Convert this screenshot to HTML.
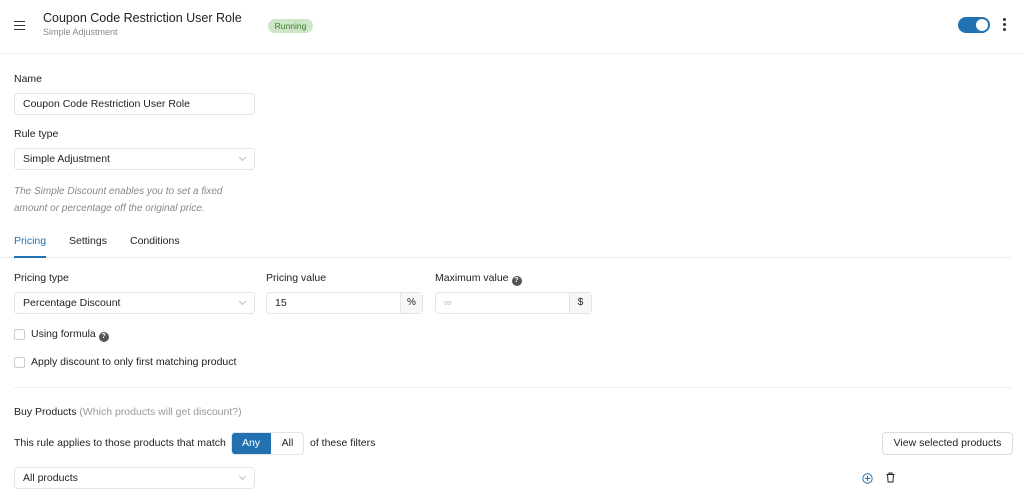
<!DOCTYPE html>
<html><head><meta charset="utf-8"><style>
*{box-sizing:border-box;margin:0;padding:0}
body{width:1024px;height:500px;background:#fff;font-family:"Liberation Sans",sans-serif;color:#1e1e1e;position:relative;overflow:hidden;font-size:10.5px}
.a{position:absolute;white-space:nowrap}
.inp{position:absolute;border:1px solid #e2e4e7;border-radius:4px;background:#fff;height:22px;line-height:20px;padding-left:8px;font-size:10.5px}
.chev{position:absolute;right:9px;top:6px;width:5px;height:5px;border-right:1px solid #bbb;border-bottom:1px solid #bbb;transform:rotate(45deg)}
.addon{position:absolute;top:0;right:0;height:20px;line-height:20px;border-left:1px solid #e2e4e7;background:#f6f7f7;width:22px;text-align:center;font-size:10px}
.cb{position:absolute;width:11px;height:11px;border:1px solid #ccc;border-radius:2px}
.q{display:inline-block;width:10px;height:10px;border-radius:50%;background:#555;color:#fff;font-size:7px;line-height:10px;text-align:center;font-weight:bold;vertical-align:-1px;margin-left:3px}
</style></head><body>
<div class="a" style="left:14px;top:21px;width:11px;height:1px;background:#333;box-shadow:0 4px 0 #333,0 8px 0 #333"></div>
<div class="a" style="left:43px;top:11px;font-size:12.5px;color:#1e1e1e">Coupon Code Restriction User Role</div>
<div class="a" style="left:43px;top:27px;font-size:9px;color:#888">Simple Adjustment</div>
<div class="a" style="left:268px;top:19px;width:45px;height:14px;border-radius:7px;background:#cde6c8;color:#3f7a2e;font-size:8.5px;line-height:14px;text-align:center">Running</div>
<div class="a" style="left:958px;top:17px;width:32px;height:16px;border-radius:8px;background:#2271b1"><div style="position:absolute;right:2px;top:2px;width:12px;height:12px;border-radius:50%;background:#fff"></div></div>
<div class="a" style="left:1003px;top:18px;width:3px;height:3px;border-radius:50%;background:#333;box-shadow:0 5px 0 #333,0 10px 0 #333"></div>
<div class="a" style="left:0;top:53px;width:1024px;height:1px;background:#f0f0f0"></div>

<div class="a" style="left:14px;top:73px">Name</div>
<div class="inp" style="left:14px;top:93px;width:241px">Coupon Code Restriction User Role</div>
<div class="a" style="left:14px;top:128px">Rule type</div>
<div class="inp" style="left:14px;top:148px;width:241px">Simple Adjustment<div class="chev"></div></div>
<div class="a" style="left:14px;top:183px;font-style:italic;color:#888;font-size:10px;line-height:17px">The Simple Discount enables you to set a fixed<br>amount or percentage off the original price.</div>

<div class="a" style="left:14px;top:235px;color:#2271b1">Pricing</div>
<div class="a" style="left:69px;top:235px">Settings</div>
<div class="a" style="left:130px;top:235px">Conditions</div>
<div class="a" style="left:0;top:257px;width:1012px;height:1px;background:#eee"></div>
<div class="a" style="left:14px;top:256px;width:32px;height:2px;background:#2271b1"></div>

<div class="a" style="left:14px;top:272px">Pricing type</div>
<div class="inp" style="left:14px;top:292px;width:241px">Percentage Discount<div class="chev"></div></div>
<div class="a" style="left:266px;top:272px">Pricing value</div>
<div class="inp" style="left:266px;top:292px;width:157px">15<div class="addon">%</div></div>
<div class="a" style="left:435px;top:272px">Maximum value<span class="q">?</span></div>
<div class="inp" style="left:435px;top:292px;width:157px;color:#bbb">∞<div class="addon" style="color:#1e1e1e">$</div></div>

<div class="cb" style="left:14px;top:329px"></div>
<div class="a" style="left:31px;top:328px">Using formula<span class="q">?</span></div>
<div class="cb" style="left:14px;top:357px"></div>
<div class="a" style="left:31px;top:356px">Apply discount to only first matching product</div>
<div class="a" style="left:14px;top:387px;width:998px;height:1px;background:#eee"></div>

<div class="a" style="left:14px;top:406px">Buy Products <span style="color:#999">(Which products will get discount?)</span></div>
<div class="a" style="left:14px;top:437px">This rule applies to those products that match</div>
<div class="a" style="left:231px;top:432px;width:73px;height:23px;border:1px solid #e2e4e7;border-radius:4px;overflow:hidden">
<div style="position:absolute;left:-1px;top:-1px;width:40px;height:23px;background:#2271b1;color:#fff;text-align:center;line-height:23px;border-radius:4px 0 0 4px">Any</div>
<div style="position:absolute;left:39px;top:0;width:33px;text-align:center;line-height:21px">All</div></div>
<div class="a" style="left:310px;top:437px">of these filters</div>
<div class="a" style="left:882px;top:432px;width:131px;height:23px;border:1px solid #dcdcde;border-radius:4px;text-align:center;line-height:21px">View selected products</div>
<div class="inp" style="left:14px;top:467px;width:241px">All products<div class="chev"></div></div>
<svg class="a" style="left:862px;top:473px" width="11" height="11" viewBox="0 0 11 11"><circle cx="5.5" cy="5.5" r="4.7" fill="none" stroke="#2271b1" stroke-width="1"/><path d="M5.5 3v5M3 5.5h5" stroke="#2271b1" stroke-width="1"/></svg>
<svg class="a" style="left:886px;top:472px" width="9" height="11" viewBox="0 0 9 11"><path d="M0.5 2.5h8M3 2.5V1h3v1.5M1.5 2.5l.6 7.5h4.8l.6-7.5" fill="none" stroke="#222" stroke-width="1"/></svg>
</body></html>
